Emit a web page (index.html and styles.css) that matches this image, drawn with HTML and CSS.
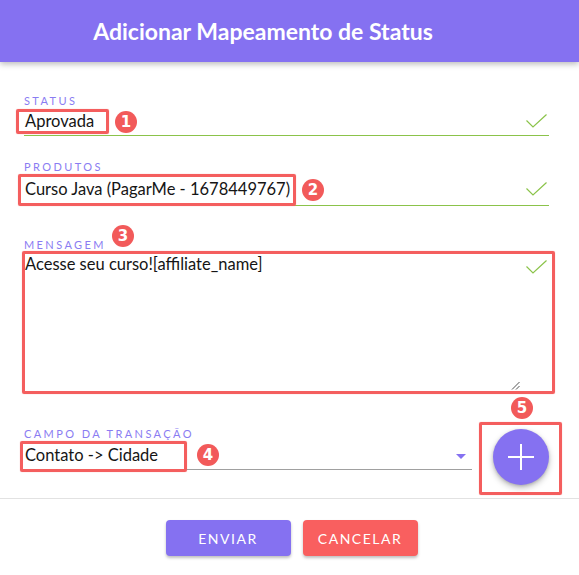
FILE: index.html
```html
<!DOCTYPE html>
<html lang="pt-BR">
<head>
<meta charset="utf-8">
<title>Adicionar Mapeamento de Status</title>
<link rel="stylesheet" href="styles.css">
</head>
<body>
<div class="dialog">
  <header class="title-bar">
    <h1 class="title">Adicionar Mapeamento de Status</h1>
  </header>

  <form class="form">
    <div class="field f-status">
      <div class="label">STATUS</div>
      <div class="control valid">
        <span class="value">Aprovada</span>
        <svg class="check" width="21" height="14" viewBox="0 0 21 14"><polyline points="0.5,6.5 7,13 20.5,0.5" fill="none" stroke="#8bc34a" stroke-width="1.2"/></svg>
      </div>
    </div>

    <div class="field f-produtos">
      <div class="label">PRODUTOS</div>
      <div class="control valid">
        <span class="value">Curso Java (PagarMe - 1678449767)</span>
        <svg class="check" width="21" height="14" viewBox="0 0 21 14"><polyline points="0.5,6.5 7,13 20.5,0.5" fill="none" stroke="#8bc34a" stroke-width="1.2"/></svg>
      </div>
    </div>

    <div class="field f-mensagem">
      <div class="label">MENSAGEM</div>
      <div class="textarea">
        <span class="value">Acesse seu curso![affiliate_name]</span>
        <svg class="check" width="21" height="14" viewBox="0 0 21 14"><polyline points="0.5,6.5 7,13 20.5,0.5" fill="none" stroke="#8bc34a" stroke-width="1.2"/></svg>
        <svg class="resizer" width="9" height="9" viewBox="0 0 9 9"><path d="M8.5 1 L1 8.5 M8.5 5 L5 8.5" stroke="#555" stroke-width="1" fill="none"/></svg>
      </div>
    </div>

    <div class="row">
      <div class="field f-campo">
        <div class="label">CAMPO DA TRANSAÇÃO</div>
        <div class="control select">
          <span class="value">Contato -&gt; Cidade</span>
          <span class="caret"></span>
        </div>
      </div>
      <button type="button" class="fab" aria-label="Adicionar">
        <svg width="26" height="26" viewBox="0 0 26 26"><path d="M13 0 V26 M0 13 H26" stroke="#fff" stroke-width="2"/></svg>
      </button>
    </div>
  </form>

  <footer class="actions">
    <button type="button" class="btn btn-primary">ENVIAR</button>
    <button type="button" class="btn btn-danger">CANCELAR</button>
  </footer>

  <span class="anno anno-1"></span>
  <span class="anno anno-2"></span>
  <span class="anno anno-3"></span>
  <span class="anno anno-4"></span>
  <span class="anno anno-5"></span>

  <span class="badge badge-1">1</span>
  <span class="badge badge-2">2</span>
  <span class="badge badge-3">3</span>
  <span class="badge badge-4">4</span>
  <span class="badge badge-5">5</span>
</div>
</body>
</html>
```

FILE: styles.css
```css
* { box-sizing: border-box; }

html, body {
  margin: 0;
  padding: 0;
  background: #ffffff;
}

body {
  font-family: Lato, "Noto Sans", sans-serif;
  color: #111;
}

.dialog {
  position: relative;
  width: 579px;
  height: 575px;
  overflow: hidden;
  background: #fff;
}

.title-bar {
  height: 62px;
  background: #8571f1;
  box-shadow: 0 2px 6px rgba(0, 0, 0, 0.28);
  display: flex;
  align-items: center;
  justify-content: center;
  padding-right: 53px;
  position: relative;
  z-index: 1;
}

.title {
  margin: 0;
  color: #fff;
  font-size: 23px;
  font-weight: 700;
  letter-spacing: 0;
}

.form {
  padding: 32px 30px 13px 24px;
}

.label {
  font-size: 11px;
  line-height: 14px;
  letter-spacing: 2.4px;
  color: #8a7cf2;
}

.value {
  font-size: 16.5px;
  line-height: 20px;
  color: #151515;
}

.control {
  display: flex;
  align-items: center;
  justify-content: space-between;
  border-bottom: 1px solid #8bc34a;
}

.f-status .control { padding: 3px 0 4px 1px; }

.f-produtos { margin-top: 24px; }
.f-produtos .control { padding: 5px 0 6px 1px; }

.check { display: block; margin-right: 2px; }

.f-mensagem { margin-top: 32px; }

.textarea {
  position: relative;
  height: 141px;
  padding: 2px 0 0 1px;
  border-bottom: 1px solid #a9a9a9;
  display: flex;
  justify-content: space-between;
  align-items: flex-start;
}

.textarea .check { margin-top: 6px; }

.resizer {
  position: absolute;
  right: 29px;
  bottom: 2px;
}

.row {
  display: flex;
  align-items: flex-start;
  gap: 21px;
  margin-top: 34px;
}

.f-campo { flex: 1; }

.select {
  padding: 4px 6px 4px 1px;
  border-bottom: 1px solid #a0a0a0;
}

.caret {
  width: 0;
  height: 0;
  border-left: 5px solid transparent;
  border-right: 5px solid transparent;
  border-top: 5px solid #8571f1;
  margin-top: 2px;
}

.fab {
  flex: none;
  width: 56px;
  height: 56px;
  margin-top: 2px;
  border: none;
  border-radius: 50%;
  background: #8571f1;
  box-shadow: 0 3px 6px rgba(0, 0, 0, 0.25), 0 1px 3px rgba(0, 0, 0, 0.15);
  display: flex;
  align-items: center;
  justify-content: center;
  padding: 0;
}

.fab svg { display: block; }

.actions {
  border-top: 1px solid #e2e2e2;
  padding-top: 21px;
  display: flex;
  justify-content: center;
  gap: 12px;
  padding-left: 4px;
}

.btn {
  height: 36px;
  border: none;
  border-radius: 4px;
  color: #fff;
  font-family: Lato, "Noto Sans", sans-serif;
  font-size: 14px;
  letter-spacing: 1.5px;
  box-shadow: 0 2px 3px rgba(0, 0, 0, 0.25);
  padding: 0;
}

.btn-primary { width: 125px; background: #8571f1; }
.btn-danger { width: 115px; background: #f95f5f; }

/* annotation overlays */
.anno {
  position: absolute;
  border: 3px solid #f45e5e;
  border-radius: 2px;
  box-shadow: 0 0 1px rgba(244, 94, 94, 0.6);
  z-index: 2;
}

.anno-1 { left: 16px; top: 109px; width: 93px; height: 25px; }
.anno-2 { left: 18px; top: 174px; width: 278px; height: 32px; }
.anno-3 { left: 22px; top: 251px; width: 533px; height: 143px; }
.anno-4 { left: 20px; top: 441px; width: 167px; height: 31px; }
.anno-5 { left: 479px; top: 422px; width: 83px; height: 73px; }

.badge {
  position: absolute;
  width: 22px;
  height: 22px;
  border-radius: 50%;
  background: #f25a5a;
  color: #fff;
  font-family: "DejaVu Sans", sans-serif;
  font-weight: 700;
  font-size: 15px;
  line-height: 22px;
  text-align: center;
  z-index: 3;
}

.badge-1 { left: 115px; top: 111px; }
.badge-2 { left: 302px; top: 179px; }
.badge-3 { left: 112px; top: 225px; }
.badge-4 { left: 197px; top: 444px; }
.badge-5 { left: 511px; top: 397px; }
```
